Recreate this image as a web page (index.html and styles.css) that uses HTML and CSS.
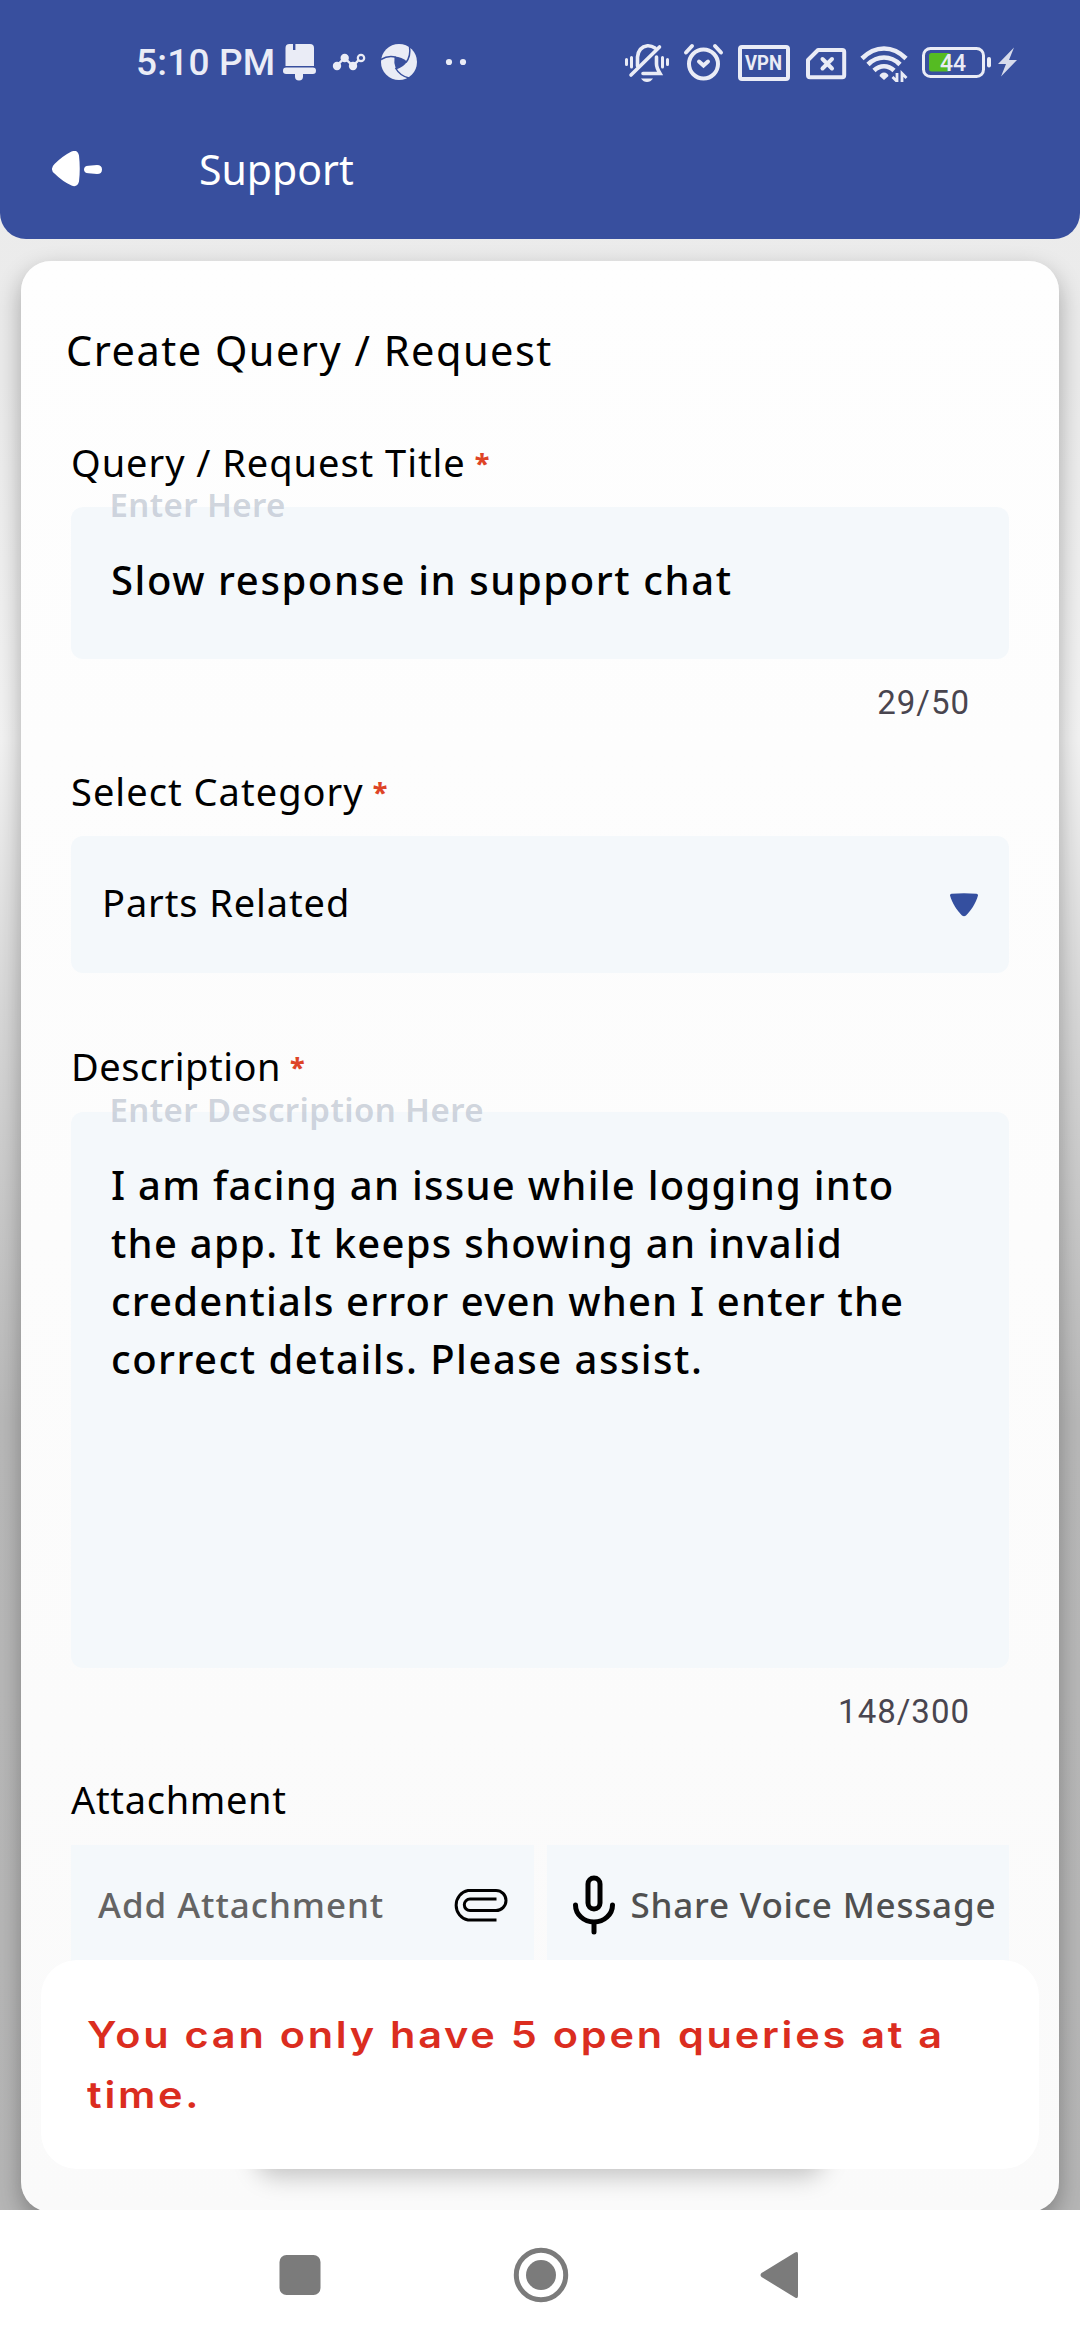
FILE: index.html
```html
<!DOCTYPE html>
<html lang="en">
<head>
<meta charset="utf-8">
<title>Support</title>
<link rel="stylesheet" href="styles.css">
</head>
<body>
<div class="screen">
  <header class="header">
    <div class="status">
      <div class="status-left">
        <span class="clock">5:10 PM</span>
        <svg width="45" height="40" viewBox="281 42 45 40" fill="#eaecf6"><path d="M285.500 66V48q0-4 4-4H293v6h2.400V44H310q4 0 4 4V66z"/><rect x="283" y="67.500" width="33" height="6.500" rx="3.200"/><path d="M295 73h8v3.500a4 4 0 0 1-8 0z"/></svg>
        <svg width="46" height="40" viewBox="326 42 46 40"><path d="M336.500 66l8-8 8.500 8 7.500-8" fill="none" stroke="#eaecf6" stroke-width="2.400"/><g fill="#eaecf6"><circle cx="337" cy="66" r="4.200"/><circle cx="344.700" cy="58" r="4.200"/><circle cx="353" cy="66" r="4.200"/></g><circle cx="361" cy="58" r="3.200" fill="#384f9e" stroke="#eaecf6" stroke-width="2.200"/></svg>
        <svg width="64" height="40" viewBox="372 42 64 40"><circle cx="399" cy="62" r="18" fill="#eaecf6"/><path d="M394.500 56.500Q402 57 407 61.500Q404 67 396 69.500Q393.500 63 394.500 56.500z" fill="#384f9e"/><g fill="none" stroke="#384f9e" stroke-width="1.500"><path d="M381 59.500Q388 55 396 57.200"/><path d="M409.500 46.500Q411 56 406 62.500"/><path d="M395.500 68Q400 76 409 78"/></g></svg>
        <svg width="40" height="40" viewBox="436 42 40 40" fill="#eaecf6"><circle cx="449" cy="62" r="3.100"/><circle cx="463" cy="62" r="3.100"/></svg>
      </div>
      <div class="status-right">
        <svg width="56" height="40" viewBox="620 42 56 40" fill="none" stroke="#eaecf6" stroke-width="3.600" stroke-linecap="round"><path d="M626.500 59.500v5M631.500 57.500v9.500M662.500 57.500v9.500M667.500 59.500v5" stroke-width="3"/><path d="M637.500 66V57q1-10 10-11.200 4-.2 7.500 2.200"/><path d="M656.500 57v7q0 3.500 3.500 9.500h-17"/><path d="M631 75L659.500 47"/><path d="M641 78.500h12q-2.500 3.500-6 3.500t-6-3.500z" fill="#eaecf6" stroke="none"/></svg>
        <svg width="56" height="40" viewBox="676 42 56 40" fill="none" stroke="#eaecf6" stroke-width="4" stroke-linecap="round"><circle cx="703.500" cy="64" r="14.500"/><path d="M699 61.500l4.500 4 4.500-4M686 52.500l6-6.500M721 52.500l-6-6.500"/></svg>
        <svg width="68" height="40" viewBox="732 42 68 40"><rect x="740" y="47" width="48" height="32" rx="2" fill="none" stroke="#eaecf6" stroke-width="4"/><text x="745" y="70" class="vpn" textLength="37" lengthAdjust="spacingAndGlyphs">VPN</text></svg>
        <svg width="56" height="40" viewBox="800 42 56 40" fill="none" stroke="#eaecf6" stroke-width="4" stroke-linejoin="round"><path d="M818 50h24.200q2 0 2 2v23.200q0 2-2 2H810q-2 0-2-2V60z"/><path d="M822.500 59l9.500 9.500M832 59l-9.500 9.500" stroke-linecap="round"/></svg>
        <svg width="60" height="40" viewBox="856 42 60 40"><g fill="none" stroke="#eaecf6" stroke-width="4.600"><path d="M862 58.500Q872 48.500 884 48.500T906 58.500"/><path d="M868 64.500Q875 57.500 884 57.500T900 64.500"/><path d="M874 70.500Q878.500 66.200 884 66.200T894 70.500"/></g><path d="M879.500 76q1-3.500 4.500-3.500t4.500 3.500l-4.500 4z" fill="#eaecf6"/><path d="M897 73v8.500l-4.500-4.500M902 82v-8.500l4.500 4.500" fill="none" stroke="#eaecf6" stroke-width="2.800"/></svg>
        <svg width="112" height="40" viewBox="916 42 112 40"><rect x="923.500" y="48.500" width="60" height="28" rx="7" fill="none" stroke="#eaecf6" stroke-width="3"/><rect x="929" y="53" width="21.500" height="18.500" rx="2.500" fill="#55bb22"/><rect x="987" y="57" width="4" height="10.500" rx="2" fill="#eaecf6"/><text x="940" y="70.500" class="charge">44</text><path d="M1014 47.500L998 64h8l-5 12.500L1017 60h-8z" fill="#d8dcec"/></svg>
      </div>
    </div>
    <div class="appbar">
      <svg width="52" height="36" viewBox="51 151 52 36" fill="#fff"><path d="M52 169.500q-.5-2.500 2.500-5.500 8-8 17-12.500c4-1.500 6.500-.5 7.500 4q1.500 13.500 0 26c-1 4.500-4 5.500-7.500 4q-9-4-17-12-2.500-2-2.500-4z"/><path d="M84 169.500q0-3.500 4.500-3.800l8.500-.7q5 0 5 4.500t-5 4.500l-8.500-.7q-4.500-.3-4.500-3.800z"/></svg>
      <h1 class="screen-title">Support</h1>
    </div>
  </header>

  <main class="card">
    <h2 class="form-title">Create Query / Request</h2>

    <div class="label">Query / Request Title<span class="req">*</span></div>
    <div class="field field-title">
      <span class="float">Enter Here</span>
      <span class="value value-title">Slow response in support chat</span>
    </div>
    <div class="count">29/50</div>

    <div class="label label-category">Select Category<span class="req">*</span></div>
    <div class="field field-category">
      <span>Parts Related</span>
      <svg width="28" height="24" viewBox="0 0 28 24"><path d="M0 2.500Q0 1 1.500.8Q14-.3 26.500.8 28 1 28 2.500C26 10 21 17.500 16 22.500Q14 24 12 22.500C7 17.500 2 10 0 2.500z" fill="#344f9f"/></svg>
    </div>

    <div class="label label-desc">Description<span class="req">*</span></div>
    <div class="field field-desc">
      <span class="float">Enter Description Here</span>
      <p class="value"><span>I am facing an issue while logging into</span> <span>the app. It keeps showing an invalid</span> <span class="tight">credentials error even when I enter the</span> <span class="loose">correct details. Please assist.</span></p>
    </div>
    <div class="count">148/300</div>

    <div class="label label-attach">Attachment</div>
    <div class="actions">
      <div class="action attach"><span>Add Attachment</span>
        <svg width="56" height="34" viewBox="0 0 56 34" fill="none" stroke="#000" stroke-width="3"><path d="M44.500 32H16a14.500 15 0 0 1 0-29.500H44a10 10 0 0 1 0 20H18a5.700 5.700 0 0 1 0-11.400H44.500"/></svg>
      </div>
      <div class="action voice">
        <svg width="42" height="60" viewBox="0 0 42 60" fill="none" stroke="#000" stroke-width="5" stroke-linecap="round"><rect x="15" y="3" width="12" height="31" rx="6"/><path d="M2.500 30a18.500 17 0 0 0 37 0M21 48v9"/></svg>
        <span>Share Voice Message</span>
      </div>
    </div>
    <div class="submit"></div>
  </main>

  <div class="toast"><p>You can only have 5 open queries at a<br>time.</p></div>

  <nav class="navbar">
    <svg width="42" height="60" viewBox="0 0 42 60"><rect x=".5" y="10" width="41" height="40" rx="7" fill="#7b7b7b"/></svg>
    <svg width="60" height="60" viewBox="0 0 60 60"><circle cx="30" cy="30" r="24.700" fill="none" stroke="#7b7b7b" stroke-width="5"/><circle cx="30" cy="30" r="15" fill="#7b7b7b"/></svg>
    <svg width="40" height="60" viewBox="0 0 40 60"><path d="M1.500 28L35 7.500q3-1.500 3 1.500v42q0 3-3 1.500L1.500 32q-2-2 0-4z" fill="#7b7b7b"/></svg>
  </nav>
</div>
</body>
</html>
```
FILE: styles.css
```css
* { box-sizing: border-box; margin: 0; padding: 0; }

body { background: #fff; color: #000; font-family: "Noto Sans", sans-serif; }

svg { display: block; flex: none; }

.screen {
  position: relative;
  width: 1080px;
  height: 2340px;
  overflow: hidden;
  display: flex;
  flex-direction: column;
  background: linear-gradient(#ececec 0, #ebebeb 380px, #f3f3f3 740px, #d9d9d9 1000px, #b9b9b9 1420px, #b6b6b6 2210px);
}

/* Header */
.header {
  flex: none;
  height: 239px;
  padding-top: 42px;
  background: #384f9e;
  border-radius: 0 0 26px 26px;
}

.status { display: flex; justify-content: space-between; padding: 0 52px 0 136px; height: 40px; }
.status-left, .status-right { display: flex; align-items: center; }
.clock {
  width: 145px;
  font: 500 37px/40px Roboto, sans-serif;
  letter-spacing: .2px;
  color: #eaecf6;
  padding-top: 2px;
  white-space: nowrap;
}
.vpn { font: 700 20px Roboto, sans-serif; fill: #eaecf6; }
.charge { font: 500 23px Roboto, sans-serif; fill: #eaecf6; }

.appbar { display: flex; align-items: center; gap: 96px; padding: 59px 0 0 51px; }
.screen-title { font-size: 41px; font-weight: 400; line-height: 56px; color: #fff; }

/* Form card */
.card {
  flex: none;
  height: 1951px;
  margin: 22px 21px 0;
  padding: 61px 50px 0;
  border-radius: 30px;
  background: linear-gradient(#fefefe, #fafafa);
  box-shadow: 0 10px 24px rgba(0, 0, 0, .3);
}

.form-title {
  margin: 0 0 58px -5px;
  font-size: 41.500px;
  font-weight: 400;
  line-height: 56px;
  letter-spacing: 1.500px;
}

.label { margin-bottom: 19px; font-size: 38px; line-height: 52px; letter-spacing: .960px; white-space: nowrap; }
.req {
  margin-left: 9px;
  font-size: 27px;
  font-weight: 800;
  line-height: 1;
  letter-spacing: 0;
  color: #de4426;
  position: relative;
  top: -4px;
}
.label-category { margin-top: 42px; letter-spacing: 1.030px; }
.label-desc { margin-top: 67px; margin-bottom: 20px; letter-spacing: .500px; }
.label-attach { margin-top: 41px; margin-bottom: 20px; letter-spacing: .670px; }

.field { position: relative; border-radius: 12px; background: #f4f8fb; }
.field-title { height: 152px; padding: 44px 40px 0; }
.field-category {
  display: flex;
  align-items: center;
  justify-content: space-between;
  height: 137px;
  padding: 0 31px 0 31px;
  font-size: 38px;
  letter-spacing: .900px;
}
.field-category span { padding-bottom: 5px; }
.field-desc { height: 556px; padding: 44px 40px 0; }

.float {
  position: absolute;
  left: 38.500px;
  top: -24px;
  font-size: 33px;
  font-weight: 600;
  line-height: 44px;
  letter-spacing: .400px;
  color: rgba(182, 190, 203, .65);
}
.value { font-size: 40px; font-weight: 500; line-height: 58px; letter-spacing: 1.270px; white-space: nowrap; }
.value-title { display: block; letter-spacing: 1.600px; }
.value span { display: block; }
.value .tight { letter-spacing: 1.160px; }
.value .loose { letter-spacing: 1.500px; }

.count {
  margin-top: 24px;
  padding-right: 39px;
  text-align: right;
  font: 400 33px/40px Roboto, sans-serif;
  letter-spacing: 1px;
  color: #49454f;
}

.actions { display: grid; grid-template-columns: 1fr 1fr; gap: 13px; }
.action {
  display: flex;
  align-items: center;
  height: 119px;
  background: #f4f8fb;
  font-size: 35px;
  font-weight: 500;
  white-space: nowrap;
}
.attach { justify-content: space-between; padding: 0 26px 0 27px; letter-spacing: .950px; color: #646464; }
.voice { gap: 16px; padding-left: 26px; letter-spacing: .800px; color: #505050; }

.submit {
  width: 568px;
  height: 112px;
  margin: 90px auto 0;
  border-radius: 20px;
  background: #384f9e;
  box-shadow: 0 11px 24px rgba(0, 0, 0, .22);
}

/* Error message shown over the form */
.toast {
  position: absolute;
  left: 41px;
  right: 41px;
  top: 1960px;
  height: 209px;
  padding: 45px 46px 0;
  border-radius: 36px;
  background: #fff;
}
.toast p {
  width: 760px;
  font: 600 37px/60px Inter, sans-serif;
  letter-spacing: 2.460px;
  color: #db2d1f;
  white-space: nowrap;
  transform: scaleX(1.12);
  transform-origin: left;
}

.navbar {
  position: absolute;
  left: 0;
  right: 0;
  bottom: 0;
  height: 130px;
  padding: 0 280px 0 279px;
  display: flex;
  align-items: center;
  justify-content: space-between;
  background: #fff;
}
```
